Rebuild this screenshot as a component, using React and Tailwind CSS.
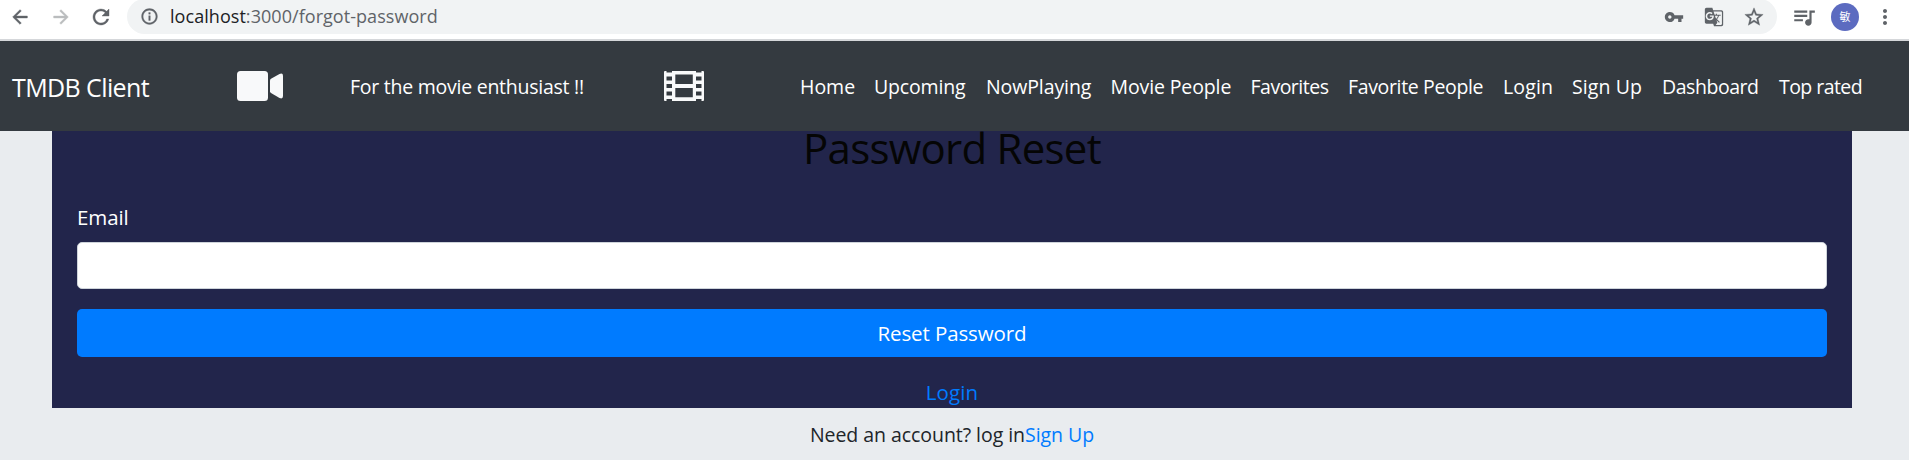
import { MdArrowBack, MdArrowForward, MdRefresh, MdInfoOutline, MdVpnKey, MdGTranslate, MdStarBorder, MdQueueMusic, MdMoreVert } from "react-icons/md";

const LINKS = [
  ["Home", "w-[74px]"],
  ["Upcoming", "w-[112px] tracking-[-0.15px]"],
  ["NowPlaying", "w-[124.5px] tracking-[-0.1px]"],
  ["Movie People", "w-[140px] tracking-[-0.12px]"],
  ["Favorites", "w-[97.5px] tracking-[-0.5px]"],
  ["Favorite People", "w-[155px] tracking-[-0.35px]"],
  ["Login", "w-[69px] tracking-[0.15px]"],
  ["Sign Up", "w-[90px] tracking-[0.1px]"],
  ["Dashboard", "w-[117px] tracking-[-0.45px]"],
  ["Top rated", "w-[90px] tracking-[-0.55px]"],
];

function Film() {
  return (
    <svg viewBox="0 0 40 30" className="h-[30px] w-10" fill="#f8f9fa" fillRule="evenodd">
      <path d="M0 1Q0 0 1 0H2.5V1.500H8V0H32V1.500H37.500V0H39Q40 0 40 1V29Q40 30 39 30H37.500V28H32V30H8V28H2.500V30H1Q0 30 0 29ZM2.500 5.500V9.500H8V5.500ZM2.500 13V17H8V13ZM2.500 20.500V24.500H8V20.500ZM32 5.500V9.500H37.500V5.500ZM32 13V17H37.500V13ZM32 20.500V24.500H37.500V20.500ZM11.300 3.600V13H28.800V3.600ZM11.300 16.900V26.300H28.800V16.900Z" />
    </svg>
  );
}

function VideoCamera() {
  return (
    <svg viewBox="0 0 46 30" className="h-[30px] w-[46px]" fill="#f8f9fa">
      <rect width="31" height="30" rx="3.5" />
      <path d="M33 9.500Q33 8.500 34 7.700L42.500 3Q46 1.500 46 5V25Q46 28.500 42.500 27L34 22Q33 21.300 33 20.300Z" />
    </svg>
  );
}

function BrowserBar() {
  return (
    <div className="flex h-[41px] shrink-0 border-b-2 border-[#d5d7da] bg-white text-[#5f6368]">
      <div className="flex h-[34px] w-[127px] items-center pl-[9px]">
        <MdArrowBack className="mr-[19px] size-[22px] [&>path:last-child]:[stroke-width:0.5]" />
        <MdArrowForward className="mr-[17px] size-[22px] text-[#babcbe] [&>path:last-child]:[stroke-width:0.5]" />
        <MdRefresh className="size-[24px] [&>path:last-child]:[stroke-width:0.4]" />
      </div>
      <div className="-mt-px flex h-[35px] w-[1650px] items-center rounded-full bg-[#f1f3f4] pl-[13px]">
        <MdInfoOutline className="mr-[11px] size-[19px] [&>path:last-child]:[stroke-width:0.4]" />
        <span className="flex-1 text-[18px] tracking-[0.05px]"><span className="text-[#202124]">localhost</span>:3000/forgot-password</span>
        <MdVpnKey className="mr-[20px] size-[20px]" />
        <MdGTranslate className="mr-[19px] size-[20px]" />
        <MdStarBorder className="mr-[12px] size-[22px] [&>path:last-child]:[stroke-width:0.4]" />
      </div>
      <div className="flex h-[34px] items-center pl-[14px]">
        <MdQueueMusic className="mr-[14px] size-[26px]" />
        <span className="mr-[14px] flex size-7 items-center justify-center rounded-full bg-[#5c6bc0] text-[11px] text-white">敏</span>
        <MdMoreVert className="size-[24px]" />
      </div>
    </div>
  );
}

export default function App() {
  return (
    <div className="flex h-[460px] w-[1909px] flex-col overflow-hidden bg-[#e9ecef] font-['Open_Sans','Noto_Sans_CJK_SC',sans-serif]">
      <BrowserBar />
      <nav className="flex h-[90px] shrink-0 items-center bg-[#343a40] text-[19.5px] text-white">
        <a className="w-[226px] pt-[3px] pl-[12px] text-[25px] tracking-[-0.6px] whitespace-nowrap">TMDB Client</a>
        <div className="w-[124px] pl-[11px]"><VideoCamera /></div>
        <span className="w-[314px] pt-[2px] tracking-[-0.25px] whitespace-nowrap">For the movie enthusiast !!</span>
        <div className="w-[136px]"><Film /></div>
        <ul className="flex pt-[2px] whitespace-nowrap">
          {LINKS.map(([label, width]) => (
            <li key={label} className={width}>{label}</li>
          ))}
        </ul>
      </nav>
      <main className="mx-[52px] w-[1800px] shrink-0">
        <section className="flex h-[277px] flex-col bg-[#22254b] px-[25px]">
          <h2 className="h-[71px] text-center text-[42px] leading-[34px] tracking-[-0.75px] text-[#050505]">Password Reset</h2>
          <label className="h-[40px] text-[20.5px] leading-[30px] font-medium tracking-[-0.1px] text-white">Email</label>
          <input className="h-[47px] shrink-0 rounded-[5px] border border-[#ced4da] bg-white" />
          <button className="mt-[20px] h-[48px] shrink-0 rounded-[5px] bg-[#007bff] text-[20.5px] leading-[48px] tracking-[-0.1px] text-white">Reset Password</button>
          <a className="mt-[20px] text-center text-[20.5px] leading-[30px] tracking-[0.15px] text-[#007bff]">Login</a>
        </section>
        <p className="pt-[12px] text-center text-[19.5px] leading-[30px] tracking-[-0.05px] text-[#212529]">
          Need an account? log in<a className="text-[#007bff]">Sign Up</a>
        </p>
      </main>
    </div>
  );
}
